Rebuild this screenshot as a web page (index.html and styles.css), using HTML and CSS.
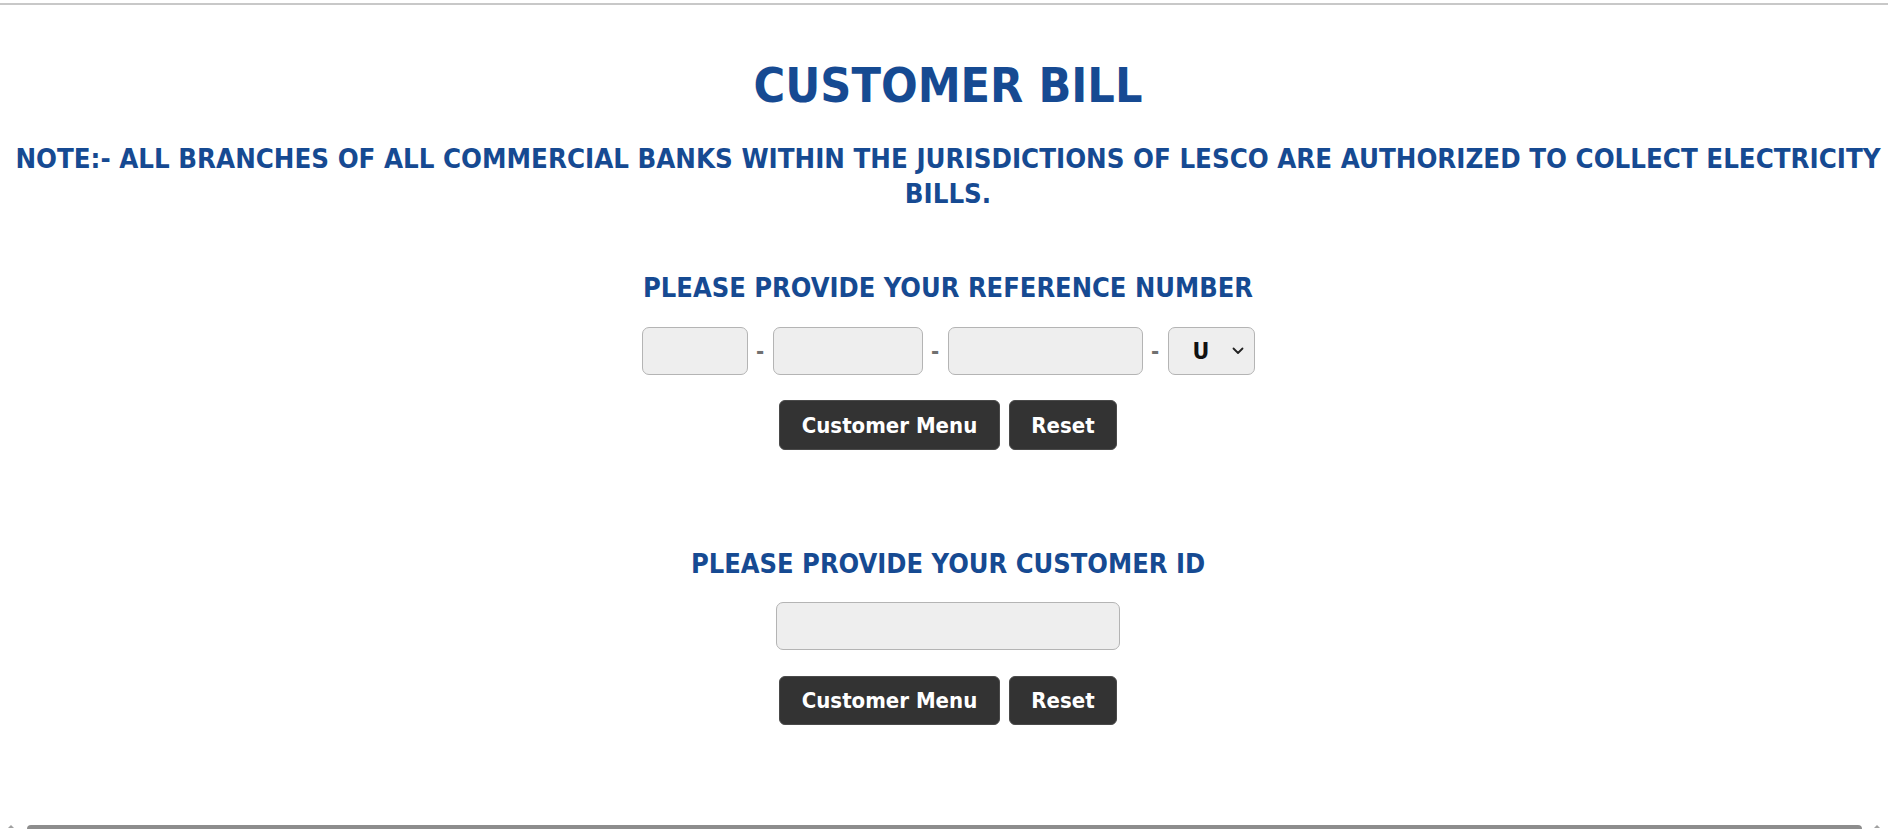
FILE: index.html
```html
<!DOCTYPE html>
<html lang="en">
<head>
<meta charset="utf-8">
<title>Customer Bill</title>
<link rel="stylesheet" href="styles.css">
</head>
<body>
<div class="topline"></div>
<div class="page">
  <h1 class="title">CUSTOMER BILL</h1>
  <p class="note">NOTE:- ALL BRANCHES OF ALL COMMERCIAL BANKS WITHIN THE JURISDICTIONS OF LESCO ARE AUTHORIZED TO COLLECT ELECTRICITY BILLS.</p>

  <form class="block block-ref">
    <h2 class="heading">PLEASE PROVIDE YOUR REFERENCE NUMBER</h2>
    <div class="ref-row">
      <input class="field f1" type="text">
      <span class="dash">-</span>
      <input class="field f2" type="text">
      <span class="dash">-</span>
      <input class="field f3" type="text">
      <span class="dash">-</span>
      <span class="select-wrap">
        <select class="field sel"><option>U</option><option>R</option></select>
        <svg class="chev" width="12" height="8" viewBox="0 0 12 8"><path d="M1.5 1.5 L6 6 L10.5 1.5" fill="none" stroke="#222" stroke-width="1.8" stroke-linecap="round" stroke-linejoin="round"/></svg>
      </span>
    </div>
    <div class="btn-row">
      <button type="button" class="btn btn-menu">Customer Menu</button>
      <button type="reset" class="btn btn-reset">Reset</button>
    </div>
  </form>

  <form class="block block-id">
    <h2 class="heading">PLEASE PROVIDE YOUR CUSTOMER ID</h2>
    <input class="field fid" type="text">
    <div class="btn-row">
      <button type="button" class="btn btn-menu">Customer Menu</button>
      <button type="reset" class="btn btn-reset">Reset</button>
    </div>
  </form>
</div>
<div class="hscroll">
  <span class="arrow arrow-l"></span>
  <span class="thumb"></span>
  <span class="arrow arrow-r"></span>
</div>
</body>
</html>
```
FILE: styles.css
```css
html, body {
  margin: 0;
  padding: 0;
  background: #ffffff;
  overflow: hidden;
}
body {
  font-family: "DejaVu Sans Condensed", "DejaVu Sans", sans-serif;
  font-stretch: condensed;
}
.topline {
  margin-top: 3px;
  height: 2px;
  background: #c8c8c8;
}
.page {
  width: 1896px;
  display: flex;
  flex-direction: column;
  align-items: center;
  text-align: center;
}
.title {
  margin: 52px 0 0;
  font-size: 48px;
  line-height: 56px;
  font-weight: bold;
  color: #164a92;
}
.note {
  margin: 28px 0 0;
  padding: 0 10px;
  font-size: 27.4px;
  line-height: 35px;
  font-weight: bold;
  color: #164a92;
}
.block {
  display: flex;
  flex-direction: column;
  align-items: center;
  margin: 0;
}
.block-ref { margin-top: 62px; }
.block-id { margin-top: 99px; }
.heading {
  margin: 0;
  font-size: 27px;
  line-height: 30px;
  font-weight: bold;
  color: #164a92;
}
.ref-row {
  margin-top: 24px;
  display: flex;
  align-items: center;
}
.field {
  box-sizing: border-box;
  height: 48px;
  background: #eeeeee;
  border: 1px solid #b4b4b4;
  border-radius: 7px;
  outline: none;
  padding: 0 10px;
  font-family: inherit;
}
.f1 { width: 106px; }
.f2 { width: 150px; }
.f3 { width: 195px; }
.fid { width: 344px; margin-top: 23px; }
.dash {
  width: 25px;
  font-size: 22px;
  color: #707070;
  font-weight: bold;
}
.select-wrap {
  position: relative;
  display: inline-block;
}
.sel {
  width: 87px;
  appearance: none;
  -webkit-appearance: none;
  padding: 0 0 0 24px;
  font-size: 23px;
  font-weight: bold;
  color: #111111;
  text-align: left;
}
.chev {
  position: absolute;
  right: 11px;
  top: 20px;
  pointer-events: none;
}
.btn-row {
  margin-top: 25px;
  display: flex;
  gap: 9px;
}
.block-id .btn-row { margin-top: 26px; }
.btn {
  box-sizing: border-box;
  height: 50px;
  background: #333333;
  color: #ffffff;
  border: 1px solid #4a4a4a;
  border-radius: 6px;
  font-family: inherit;
  font-size: 22px;
  font-weight: bold;
  padding: 0;
}
.block-id .btn { height: 49px; }
.btn-menu { width: 221px; }
.btn-reset { width: 108px; }
.hscroll {
  position: fixed;
  left: 0;
  right: 0;
  bottom: 0;
  height: 4px;
  display: flex;
  align-items: flex-start;
}
.thumb {
  margin-left: 27px;
  width: 1835px;
  height: 8px;
  border-radius: 4px;
  background: #8d8d8d;
}
.arrow {
  width: 0;
  height: 0;
}
.arrow-l {
  position: absolute;
  left: 8px;
  top: 0;
  border-left: 3px solid transparent;
  border-right: 3px solid transparent;
  border-bottom: 3px solid #a0a0a0;
}
.arrow-r {
  position: absolute;
  right: 8px;
  top: 0;
  border-left: 3px solid transparent;
  border-right: 3px solid transparent;
  border-bottom: 3px solid #a0a0a0;
}
```
